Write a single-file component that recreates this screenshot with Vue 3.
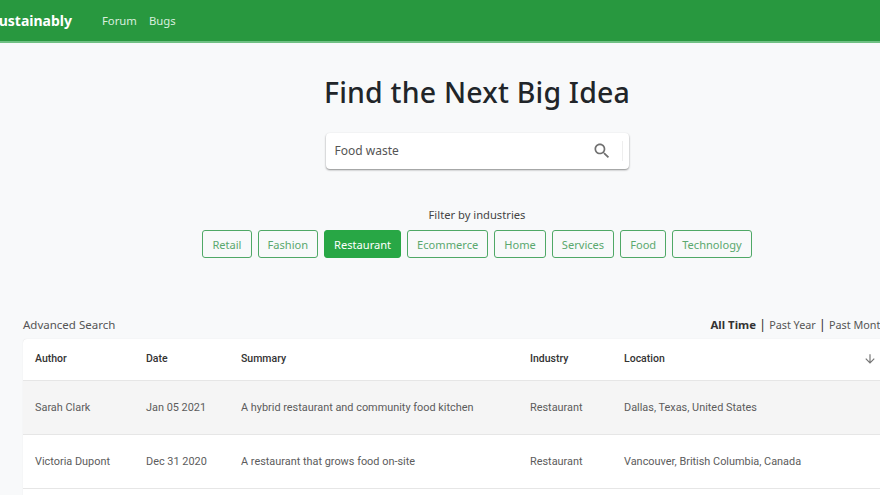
<script setup>
const navLinks = ["Forum", "Bugs"];
const industries = ["Retail", "Fashion", "Restaurant", "Ecommerce", "Home", "Services", "Food", "Technology"];
const selected = "Restaurant";
const ranges = ["Past Year", "Past Month"];
const rows = [
  { author: "Sarah Clark", date: "Jan 05 2021", summary: "A hybrid restaurant and community food kitchen", industry: "Restaurant", location: "Dallas, Texas, United States", hover: true },
  { author: "Victoria Dupont", date: "Dec 31 2020", summary: "A restaurant that grows food on-site", industry: "Restaurant", location: "Vancouver, British Columbia, Canada" },
];
</script>

<template>
  <div class="page">
    <nav class="navbar">
      <span class="brand">Sustainably</span>
      <a v-for="link in navLinks" :key="link" class="nav-link">{{ link }}</a>
    </nav>

    <main class="content">
      <h1 class="title">Find the Next Big Idea</h1>

      <div class="search">
        <span class="search-text">Food waste</span>
        <svg class="search-icon" viewBox="0 0 24 24" width="20" height="20">
          <path fill="#707070" d="M15.5 14h-.79l-.28-.27C15.41 12.59 16 11.11 16 9.5 16 5.91 13.09 3 9.5 3S3 5.91 3 9.5 5.91 16 9.5 16c1.61 0 3.09-.59 4.23-1.57l.27.28v.79l5 4.99L20.49 19l-4.99-5zm-6 0C7.01 14 5 11.99 5 9.5S7.01 5 9.5 5 14 7.01 14 9.5 11.99 14 9.5 14z" />
        </svg>
        <span class="search-divider"></span>
      </div>

      <p class="filter-label">Filter by industries</p>
      <div class="chips">
        <button v-for="item in industries" :key="item" class="chip" :class="{ active: item === selected }">{{ item }}</button>
      </div>

      <section class="results">
        <div class="results-top">
          <span class="advanced">Advanced Search</span>
          <div class="ranges">
            <strong>All Time</strong>
            <template v-for="range in ranges" :key="range">
              <span class="sep">|</span><span>{{ range }}</span>
            </template>
          </div>
        </div>

        <div class="table">
          <div class="row head">
            <span>Author</span>
            <span>Date</span>
            <span>Summary</span>
            <span>Industry</span>
            <span>Location</span>
            <svg class="sort" viewBox="0 0 24 24" width="14" height="14">
              <path fill="#757575" d="M20 12l-1.41-1.41L13 16.17V4h-2v12.17l-5.58-5.59L4 12l8 8 8-8z" />
            </svg>
          </div>
          <div v-for="row in rows" :key="row.author" class="row" :class="{ hover: row.hover }">
            <span>{{ row.author }}</span>
            <span>{{ row.date }}</span>
            <span>{{ row.summary }}</span>
            <span>{{ row.industry }}</span>
            <span>{{ row.location }}</span>
          </div>
          <div class="row"></div>
        </div>
      </section>
    </main>
  </div>
</template>

<style scoped>
.page {
  width: 954px;
  height: 495px;
  overflow: hidden;
  background: #f8f9fa;
  font-family: "Noto Sans", "Open Sans", sans-serif;
  color: #212529;
}

.navbar {
  display: flex;
  align-items: center;
  height: 41px;
  background: #28983f;
  border-bottom: 2px solid #6fc083;
  margin-bottom: -1px;
}
.brand {
  margin-left: -9px;
  margin-right: 30px;
  font-size: 14px;
  font-weight: 700;
  color: #fff;
}
.nav-link {
  margin-right: 12px;
  font-size: 11.3px;
  color: #d9efdf;
}

.content {
  display: flex;
  flex-direction: column;
  align-items: center;
}
.title {
  margin: 31px 0 0;
  font-size: 28.5px;
  line-height: 38px;
  font-weight: 500;
  letter-spacing: 0.2px;
}

.search {
  display: flex;
  align-items: center;
  width: 303px;
  height: 36px;
  margin-top: 22px;
  padding: 0 6px 0 9px;
  box-sizing: border-box;
  background: #fff;
  border-radius: 4px;
  box-shadow: 0 1px 2px rgba(0, 0, 0, 0.45);
}
.search-text {
  flex: 1;
  padding-bottom: 2px;
  font-size: 12px;
  color: #555;
}
.search-icon {
  margin-right: 10px;
}
.search-divider {
  width: 1px;
  height: 20px;
  background: #eee;
}

.filter-label {
  margin: 37px 0 0;
  font-size: 11.2px;
  line-height: 18px;
  color: #444;
}
.chips {
  display: flex;
  gap: 6px;
  margin-top: 6px;
}
.chip {
  height: 28px;
  padding: 0 9px;
  background: transparent;
  border: 1px solid #4fa866;
  border-radius: 3px;
  font-family: inherit;
  font-size: 11.1px;
  color: #5aa86e;
}
.chip.active {
  background: #28a745;
  border-color: #28a745;
  color: #fff;
}

.results {
  align-self: flex-start;
  width: 871px;
  margin: 57px 0 0 23px;
}
.results-top {
  display: flex;
  justify-content: space-between;
  align-items: center;
  height: 18px;
  margin-bottom: 6px;
  font-size: 10.8px;
  color: #555;
}
.advanced {
  font-size: 11.5px;
}
.ranges {
  display: flex;
  align-items: center;
  gap: 3px;
  padding-right: 7px;
}
.ranges strong {
  font-size: 11.4px;
  color: #333;
}
.sep {
  font-size: 13px;
  line-height: 18px;
  color: #333;
}

.table {
  background: #fff;
  border-radius: 4px 4px 0 0;
  box-shadow: 0 0 1px rgba(0, 0, 0, 0.15);
  font-family: Roboto, sans-serif;
  font-size: 10.9px;
  color: #5c5c5c;
}
.row {
  display: grid;
  grid-template-columns: 111px 95px 289px 94px 1fr 14px;
  align-items: center;
  height: 53px;
  padding: 0 17px 0 12px;
  border-bottom: 1px solid #e6e6e6;
}
.row.head {
  height: 42px;
  padding-bottom: 2px;
  box-sizing: border-box;
  font-size: 10.5px;
  font-weight: 500;
  color: #333;
}
.row.hover {
  background: #f5f5f5;
}
</style>

<style>
html, body {
  overflow: hidden;
}
</style>
